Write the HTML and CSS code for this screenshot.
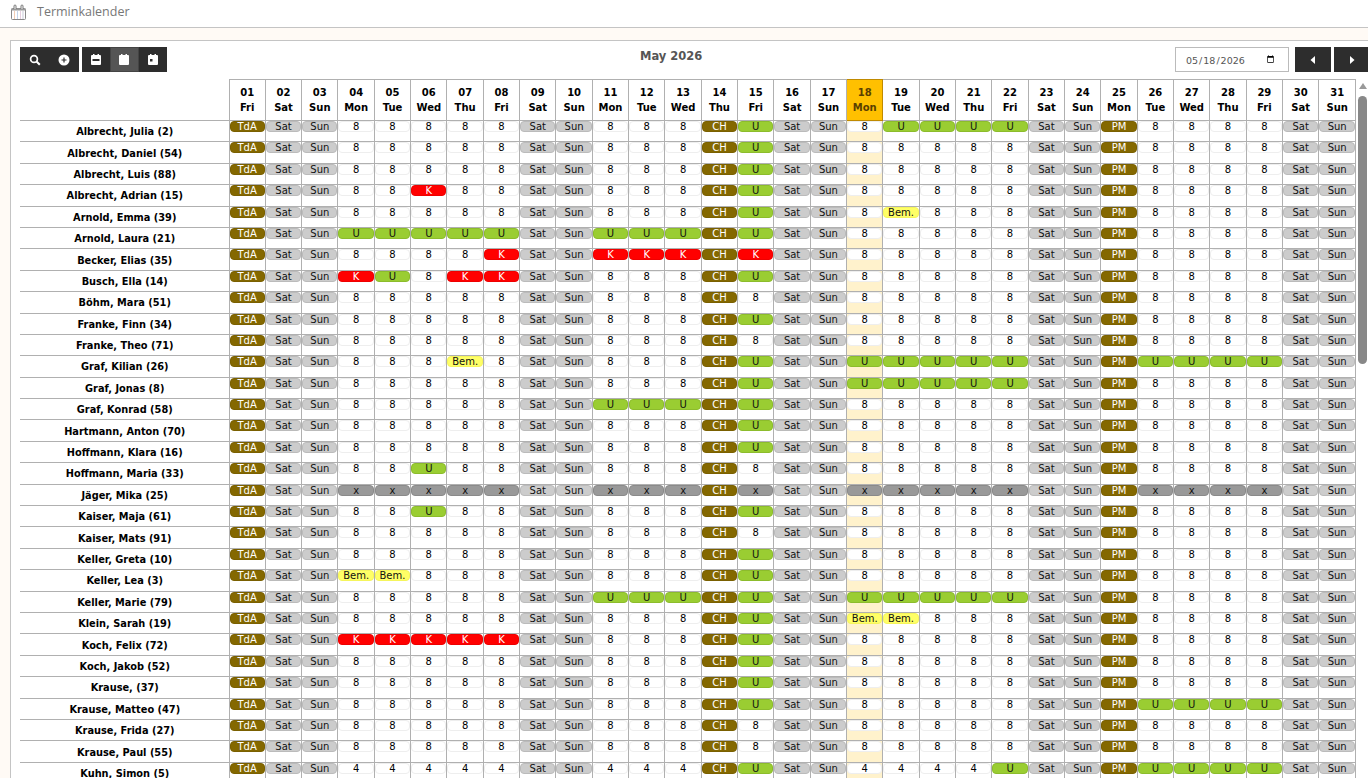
FILE: index.html
```html
<!DOCTYPE html>
<html lang="de">
<head>
<meta charset="utf-8">
<title>Terminkalender</title>
<link rel="stylesheet" href="styles.css">
</head>
<body>
<header class="topbar">
  <svg class="topbar-icon" viewBox="0 0 15 16" width="15" height="16" aria-hidden="true">
    <rect x="0.500" y="4.500" width="14" height="11" rx="1" fill="#fff" stroke="#888"/>
    <rect x="0.500" y="4.500" width="14" height="2" fill="#999"/>
    <path d="M3.500 7v8" stroke="#f2cdb5"/>
    <path d="M6.500 7v8" stroke="#c4d4ea"/>
    <path d="M9.500 7v8" stroke="#e6cfe0"/>
    <path d="M12 7v8" stroke="#c9c9d8"/>
    <path d="M3 5V2a1 1 0 0 1 2 0v3M10 5V2a1 1 0 0 1 2 0v3" stroke="#777" fill="#fff"/>
  </svg>
  <span class="topbar-title">Terminkalender</span>
</header>
<main class="stage">
  <section class="panel">
    <div class="controls">
      <div class="toolgroups">
        <div class="btn-group">
          <button class="tool wide" aria-label="Suchen"><svg viewBox="0 0 12 12" width="12" height="12"><circle cx="5" cy="5" r="3.400" fill="none" stroke="#fff" stroke-width="1.700"/><path d="M7.500 7.500 10.800 10.800" stroke="#fff" stroke-width="2"/></svg></button>
          <button class="tool wide" aria-label="Hinzufügen"><svg viewBox="0 0 12 12" width="12" height="12"><circle cx="6" cy="6" r="5.500" fill="#fff"/><path d="M6 3.500v5M3.500 6h5" stroke="#2d2d2d" stroke-width="1.200"/></svg></button>
        </div>
        <div class="btn-group">
          <button class="tool" aria-label="Tag"><svg viewBox="0 0 10 11" width="10" height="11"><path d="M2 0h1.500v1H6.500V0H8v1h1a1 1 0 0 1 1 1v8a1 1 0 0 1-1 1H1a1 1 0 0 1-1-1V2a1 1 0 0 1 1-1h1z" fill="#fff"/><rect x="1.500" y="5" width="7" height="2" fill="#2d2d2d"/></svg></button>
          <button class="tool active" aria-label="Monat"><svg viewBox="0 0 10 11" width="10" height="11"><path d="M2 0h1.500v1H6.500V0H8v1h1a1 1 0 0 1 1 1v8a1 1 0 0 1-1 1H1a1 1 0 0 1-1-1V2a1 1 0 0 1 1-1h1z" fill="#fff"/></svg></button>
          <button class="tool" aria-label="Woche"><svg viewBox="0 0 10 11" width="10" height="11"><path d="M2 0h1.500v1H6.500V0H8v1h1a1 1 0 0 1 1 1v8a1 1 0 0 1-1 1H1a1 1 0 0 1-1-1V2a1 1 0 0 1 1-1h1z" fill="#fff"/><rect x="2" y="5" width="2.500" height="2.500" fill="#2d2d2d"/></svg></button>
        </div>
      </div>
      <h1 class="month">May 2026</h1>
      <div class="datenav">
        <input class="date" type="date" value="2026-05-18" aria-label="Datum">
        <button class="tool nav" aria-label="Zurück"><svg viewBox="0 0 8 12" width="8" height="12"><path d="M6 2v8L1.500 6z" fill="#fff"/></svg></button>
        <button class="tool nav" aria-label="Weiter"><svg viewBox="0 0 8 12" width="8" height="12"><path d="M2 2v8L6.500 6z" fill="#fff"/></svg></button>
      </div>
    </div>
    <div class="calendar">
      <table class="grid" id="grid"></table>
      <div class="scrollbar" aria-hidden="true"><span class="scroll-up"></span><span class="scroll-thumb"></span></div>
    </div>
  </section>
</main>
<script src="script.js"></script>
</body>
</html>
```

FILE: styles.css
```css
* { box-sizing: border-box; }
html, body { margin: 0; height: 100%; overflow: hidden; }
body {
  background: #fffaf5;
  font-family: "DejaVu Sans", Verdana, sans-serif;
  color: #000;
}
.topbar {
  height: 28px;
  background: #fff;
  border-bottom: 1px solid #c4c4c4;
  display: flex;
  align-items: flex-start;
  padding: 4px 0 0 11px;
  gap: 11px;
}
.topbar-title {
  font: 12.500px/16px "Open Sans", sans-serif;
  color: #777;
}
.stage { padding: 12px 0 0 10px; }
.panel {
  background: #fff;
  border: 1px solid #c4c4c4;
  border-right: 0;
  padding: 6px 0 0 9px;
  height: 760px;
}
.controls {
  display: flex;
  justify-content: space-between;
  align-items: flex-start;
  height: 32px;
  position: relative;
}
.toolgroups { display: flex; gap: 3px; }
.btn-group { display: flex; background: #2d2d2d; height: 25px; }
.tool {
  width: 28.330px;
  height: 25px;
  padding: 0;
  border: 0;
  background: #2d2d2d;
  display: flex;
  align-items: center;
  justify-content: center;
}
.tool.wide { width: 29.500px; }
.tool.active { background: #555; border: 1px solid #444; }
.month {
  position: absolute;
  left: 620px;
  top: 2px;
  margin: 0;
  font-size: 11.500px;
  line-height: 14px;
  font-weight: bold;
  color: #555;
}
.datenav { display: flex; align-items: flex-start; gap: 3px; margin-right: -2px; }
.date {
  width: 114px;
  height: 25px;
  margin-right: 3px;
  padding: 1px 11px 0 9px;
  border: 1px solid #bbb;
  background: #fff;
  font: 9.500px "DejaVu Sans", sans-serif;
  color: #555;
}
.nav { width: 36px; }
.calendar { display: flex; align-items: flex-start; }
.grid {
  width: 1336px;
  table-layout: fixed;
  border-collapse: collapse;
  flex: none;
}
.grid th, .grid td { border: 1px solid #b0b0b0; padding: 0; text-align: center; }
.grid .corner { width: 209px; border-width: 0 1px 1px 0; }
.day-head {
  height: 41px;
  font-size: 10px;
  line-height: 15px;
  font-weight: bold;
  padding-top: 2px;
}
.day-head.today { background: #ffc000; border: 1px solid #c08a00; color: #5a4000; }
.grid tbody tr { height: 21.400px; }
.grid .name {
  border-left: 0;
  font-size: 9.800px;
  font-weight: bold;
  white-space: nowrap;
  vertical-align: middle;
  padding: 1px 0 0 1px;
}
.cell { vertical-align: top; }
.cell.today { background: #fff2cc; }
.pill {
  display: block;
  height: 11px;
  border: 1px solid #eee;
  border-radius: 4px;
  background: #fff;
  font-size: 10px;
  line-height: 9px;
  color: #000;
}
.pill.tda, .pill.ch, .pill.pm { background: #846800; border-color: #7a6000; color: #fff; }
.pill.off { background: #ccc; border-color: #bbb; color: #111; }
.pill.u { background: #9acd32; border-color: #8cbc2c; color: #111; }
.pill.k { background: #f00; border-color: #e00; color: #fff; }
.pill.bem { background: #ff6; border-color: #f5f55c; color: #111; }
.pill.x { background: #999; border-color: #8a8a8a; color: #111; }
.scrollbar {
  flex: none;
  width: 11px;
  margin-left: 1px;
  display: flex;
  flex-direction: column;
  align-items: center;
  padding-top: 4px;
  gap: 7px;
}
.scroll-up {
  width: 0;
  height: 0;
  border-left: 4px solid transparent;
  border-right: 4px solid transparent;
  border-bottom: 6px solid #999;
}
.scroll-thumb {
  width: 9px;
  height: 268px;
  background: #888;
  border-radius: 5px;
}
```

FILE: script.js
```js
var DAYS = ["Fri","Sat","Sun","Mon","Tue","Wed","Thu"];
var TODAY = 18;
var WEEK1 = [4,5,6,7,8], WEEK2 = [11,12,13], WEEK3 = [18,19,20,21,22], WEEK4 = [26,27,28,29];

var PEOPLE = [
  ["Albrecht, Julia (2)", [[WEEK3.slice(1), "U"]]],
  ["Albrecht, Daniel (54)"],
  ["Albrecht, Luis (88)"],
  ["Albrecht, Adrian (15)", [[[6], "K"]]],
  ["Arnold, Emma (39)", [[[19], "Bem."]]],
  ["Arnold, Laura (21)", [[WEEK1, "U"], [WEEK2, "U"]]],
  ["Becker, Elias (35)", [[[8,11,12,13,15], "K"]]],
  ["Busch, Ella (14)", [[[4,7,8], "K"], [[5], "U"]]],
  ["Böhm, Mara (51)", [[[15], "8"]]],
  ["Franke, Finn (34)"],
  ["Franke, Theo (71)", [[[15], "8"]]],
  ["Graf, Kilian (26)", [[[7], "Bem."], [WEEK3, "U"], [WEEK4, "U"]]],
  ["Graf, Jonas (8)", [[WEEK3, "U"]]],
  ["Graf, Konrad (58)", [[WEEK2, "U"]]],
  ["Hartmann, Anton (70)"],
  ["Hoffmann, Klara (16)"],
  ["Hoffmann, Maria (33)", [[[6], "U"], [[15], "8"]]],
  ["Jäger, Mika (25)", [[WEEK1, "x"], [WEEK2, "x"], [[15], "x"], [WEEK3, "x"], [WEEK4, "x"]]],
  ["Kaiser, Maja (61)", [[[6], "U"]]],
  ["Kaiser, Mats (91)", [[[15], "8"]]],
  ["Keller, Greta (10)"],
  ["Keller, Lea (3)", [[[4,5], "Bem."]]],
  ["Keller, Marie (79)", [[WEEK2, "U"], [WEEK3, "U"]]],
  ["Klein, Sarah (19)", [[[18,19], "Bem."]]],
  ["Koch, Felix (72)", [[WEEK1, "K"]]],
  ["Koch, Jakob (52)"],
  ["Krause, (37)"],
  ["Krause, Matteo (47)", [[WEEK4, "U"]]],
  ["Krause, Frida (27)", [[[15], "8"]]],
  ["Krause, Paul (55)", [[[15], "8"]]],
  ["Kuhn, Simon (5)", [[[22].concat(WEEK4), "U"]], "4"]
];

var FIXED = { 1: "TdA", 14: "CH", 15: "U", 25: "PM" };
var CLASSES = { "TdA": "tda", "CH": "ch", "PM": "pm", "Sat": "off", "Sun": "off", "U": "u", "K": "k", "Bem.": "bem", "x": "x" };

function pad(n) { return (n < 10 ? "0" : "") + n; }
function dayName(d) { return DAYS[(d - 1) % 7]; }

function valueFor(person, d) {
  var value = FIXED[d] || person[2] || "8";
  var name = dayName(d);
  if (name === "Sat" || name === "Sun") value = name;
  (person[1] || []).forEach(function (rule) {
    if (rule[0].indexOf(d) !== -1) value = rule[1];
  });
  return value;
}

var html = '<thead><tr><th class="corner"></th>';
for (var d = 1; d <= 31; d++) {
  html += '<th class="day-head' + (d === TODAY ? " today" : "") + '">' + pad(d) + "<br>" + dayName(d) + "</th>";
}
html += "</tr></thead><tbody>";
PEOPLE.forEach(function (person) {
  html += '<tr><th class="name">' + person[0] + "</th>";
  for (var d = 1; d <= 31; d++) {
    var v = valueFor(person, d);
    html += '<td class="cell' + (d === TODAY ? " today" : "") + '"><span class="pill ' + (CLASSES[v] || "num") + '">' + v + "</span></td>";
  }
  html += "</tr>";
});
html += "</tbody>";
document.getElementById("grid").innerHTML = html;
```
